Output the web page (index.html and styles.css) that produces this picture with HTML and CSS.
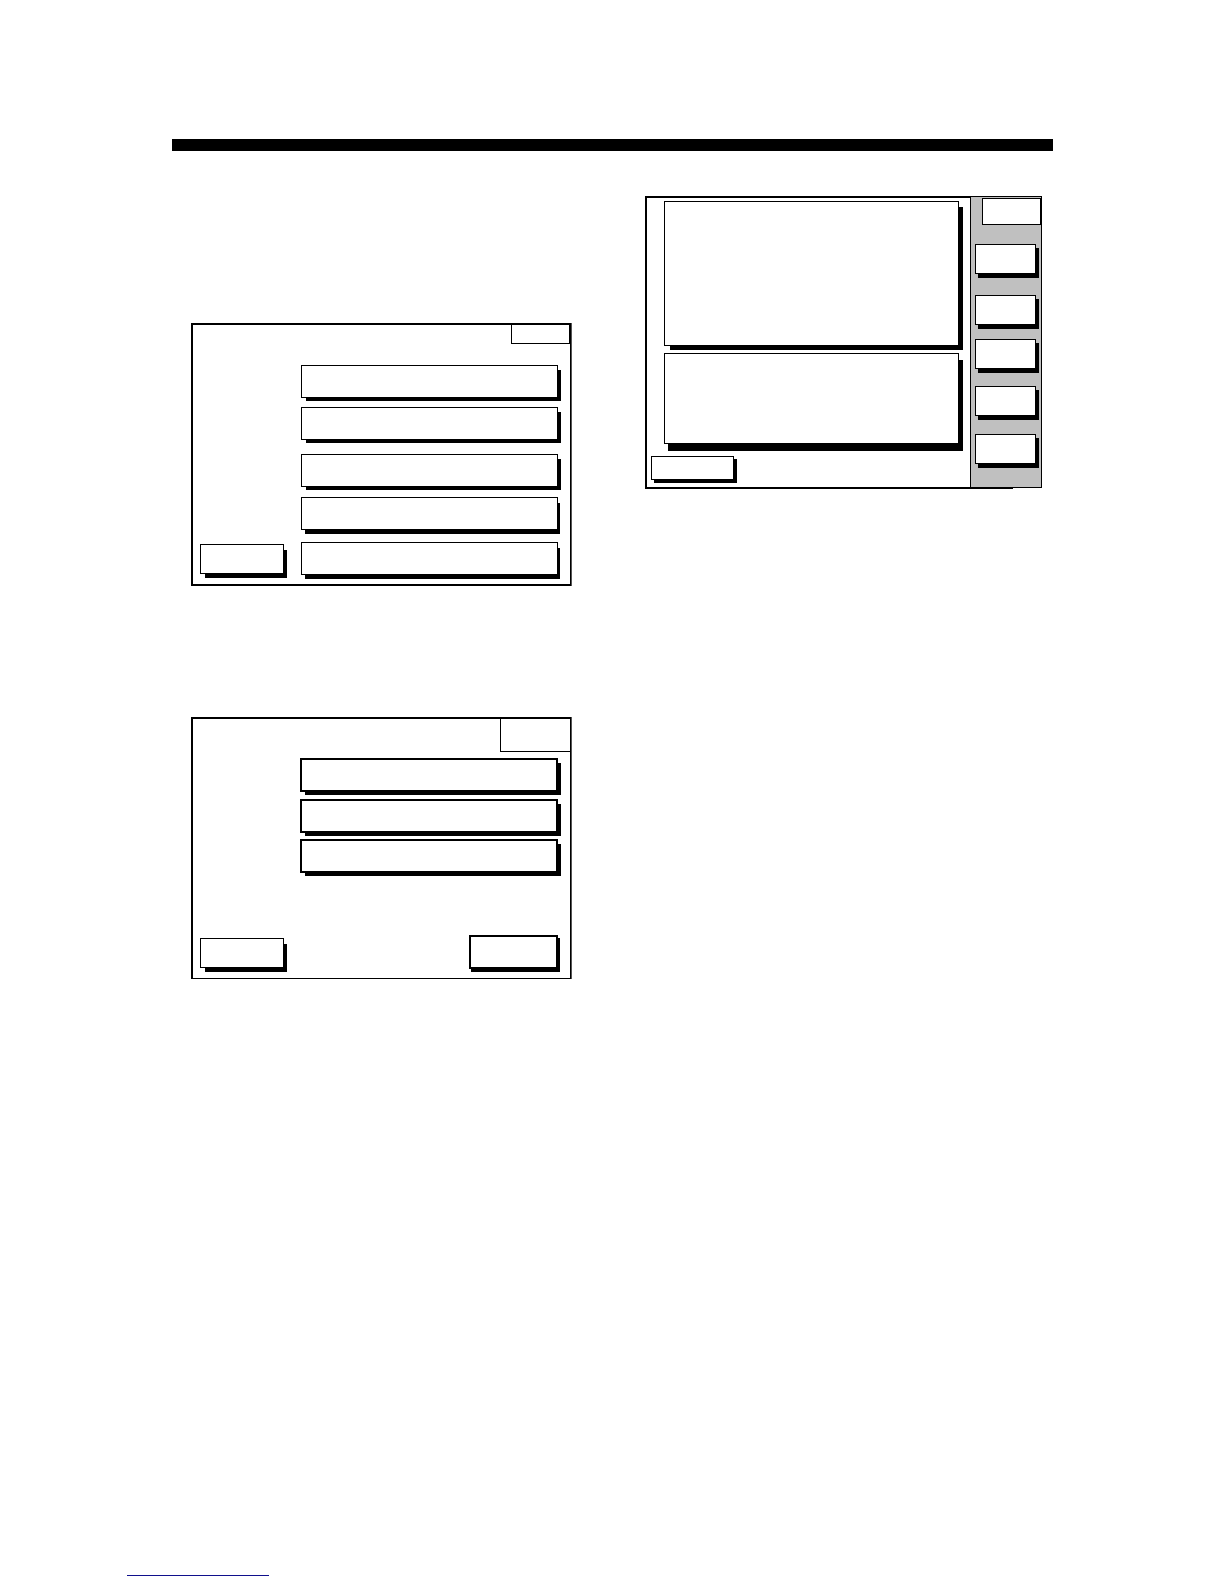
FILE: index.html
```
<!DOCTYPE html>
<html lang="en">
<head>
  <meta charset="UTF-8" />
  <meta name="viewport" content="width=device-width, initial-scale=1" />
  <title>Screen Layouts</title>
  <link rel="stylesheet" href="styles.css">
</head>
<body>
  <main class="page">
    <hr class="rule">
    <div class="columns">
      <div class="column-left">
        <section class="screen">
          <div class="tab"></div>
          <div class="screen-body">
            <button type="button" class="btn back" aria-label="Back"></button>
            <div class="menu">
              <button type="button" class="btn" aria-label="Option 1"></button>
              <button type="button" class="btn" aria-label="Option 2"></button>
              <button type="button" class="btn" aria-label="Option 3"></button>
              <button type="button" class="btn deep" aria-label="Option 4"></button>
              <button type="button" class="btn deep" aria-label="Option 5"></button>
            </div>
          </div>
        </section>

        <section class="screen screen-short">
          <div class="tab tab-large"></div>
          <div class="screen-body">
            <button type="button" class="btn back" aria-label="Back"></button>
            <div class="menu-area">
              <div class="menu">
                <button type="button" class="btn" aria-label="Option 1"></button>
                <button type="button" class="btn" aria-label="Option 2"></button>
                <button type="button" class="btn" aria-label="Option 3"></button>
              </div>
              <button type="button" class="btn next" aria-label="Next"></button>
            </div>
          </div>
        </section>
      </div>

      <div class="column-right">
        <section class="viewer">
          <div class="viewer-inner">
            <div class="viewer-main">
              <div class="box box-top"></div>
              <div class="box box-bottom"></div>
              <button type="button" class="btn viewer-back" aria-label="Back"></button>
            </div>
            <aside class="sidebar">
              <div class="sidebar-tab"></div>
              <div class="sidebar-buttons">
                <button type="button" class="btn" aria-label="Function 1"></button>
                <button type="button" class="btn" aria-label="Function 2"></button>
                <button type="button" class="btn" aria-label="Function 3"></button>
                <button type="button" class="btn" aria-label="Function 4"></button>
                <button type="button" class="btn" aria-label="Function 5"></button>
              </div>
            </aside>
          </div>
        </section>
      </div>
    </div>
  </main>
  <footer class="footer">
    <a href="#" class="footer-link" aria-label="Home page"></a>
  </footer>
</body>
</html>
```
FILE: styles.css
```
* {
  box-sizing: border-box;
}
body {
  margin: 0;
  font-family: "Liberation Sans", Arial, sans-serif;
  background: #fff;
}
.page {
  padding: 139px 171px 0 172px;
}
.rule {
  height: 12px;
  margin: 0;
  border: none;
  background: #000;
}
.columns {
  display: grid;
  grid-template-columns: 381fr 397fr;
  column-gap: 73px;
  align-items: start;
  padding: 0 11px 0 19px;
}
.column-left {
  display: flex;
  flex-direction: column;
  gap: 131px;
  padding-top: 172px;
}
.column-right {
  padding-top: 45px;
}

/* buttons */
.btn {
  display: block;
  height: 33px;
  margin: 0;
  padding: 0;
  border: 1px solid #000;
  border-radius: 0;
  background: #fff;
  box-shadow: 4px 4px 0 -1px #000;
  cursor: pointer;
}
.btn.deep {
  box-shadow: 3px 5px 0 -1px #000;
}
.btn.back {
  align-self: end;
  height: 30px;
  margin-bottom: 1px;
  box-shadow: 4px 5px 0 -1px #000;
}

/* left screens */
.screen {
  display: flex;
  flex-direction: column;
  margin-right: 1px;
  border: 2px solid #000;
  border-right-width: 1px;
  box-shadow: 1px 0 0 #555;
}
.tab {
  align-self: flex-end;
  width: 59px;
  height: 19px;
  border: 1px solid #000;
  border-top: none;
}
.screen-body {
  display: grid;
  grid-template-columns: 84px 1fr;
  column-gap: 17px;
  padding: 21px 12px 9px 7px;
}
.menu {
  display: grid;
  grid-template-rows: 42px 47px 43px 45px 33px;
  align-items: start;
}
.screen-short {
  border-bottom-width: 1px;
}
.tab-large {
  width: 70px;
  height: 33px;
  border-right: none;
}
.screen-short .screen-body {
  column-gap: 16px;
  padding-top: 6px;
}
.screen-short .menu {
  grid-template-rows: 41px 40px 34px;
}
.menu-area {
  display: flex;
  flex-direction: column;
  gap: 62px;
}
.menu-area .btn {
  height: 34px;
  border-width: 2px;
}
.menu-area .next {
  align-self: flex-end;
  width: 89px;
  box-shadow: 2px 3px 0 0 #000;
}

/* right screen, the sidebar hangs over its edge */
.viewer {
  margin-right: 29px;
  border: 2px solid #000;
  border-right: none;
}
.viewer-inner {
  display: grid;
  grid-template-columns: 1fr 72px;
  margin-right: -29px;
}
.viewer-main {
  display: flex;
  flex-direction: column;
  padding: 3px 11px 7px 4px;
}
.box {
  margin-left: 13px;
  border: 1px solid #000;
  background: #fff;
}
.box-top {
  height: 145px;
  box-shadow: 5px 5px 0 -1px #000;
}
.box-bottom {
  height: 91px;
  margin-top: 7px;
  box-shadow: 4px 7px 0 0 #000;
}
.viewer-back {
  width: 83px;
  height: 24px;
  margin-top: 12px;
  box-shadow: 3px 3px 0 0 #000;
}
.sidebar {
  display: flex;
  flex-direction: column;
  margin: -2px 0 -1px;
  padding-top: 1px;
  border: 1px solid #000;
  background: #c0c0c0;
}
.sidebar-tab {
  align-self: flex-end;
  width: 59px;
  height: 27px;
  border: 1px solid #000;
  background: #fff;
}
.sidebar-buttons {
  display: grid;
  grid-template-rows: 51px 44px 47px 48px 30px;
  align-items: start;
  padding: 19px 5px 0 4px;
}
.sidebar .btn {
  height: 30px;
  box-shadow: 3px 4px 0 0 #000;
}

.footer {
  padding: 576px 0 0 127px;
}
.footer-link {
  display: block;
  width: 142px;
  height: 21px;
  border-bottom: 1px solid #10108c;
}
```
